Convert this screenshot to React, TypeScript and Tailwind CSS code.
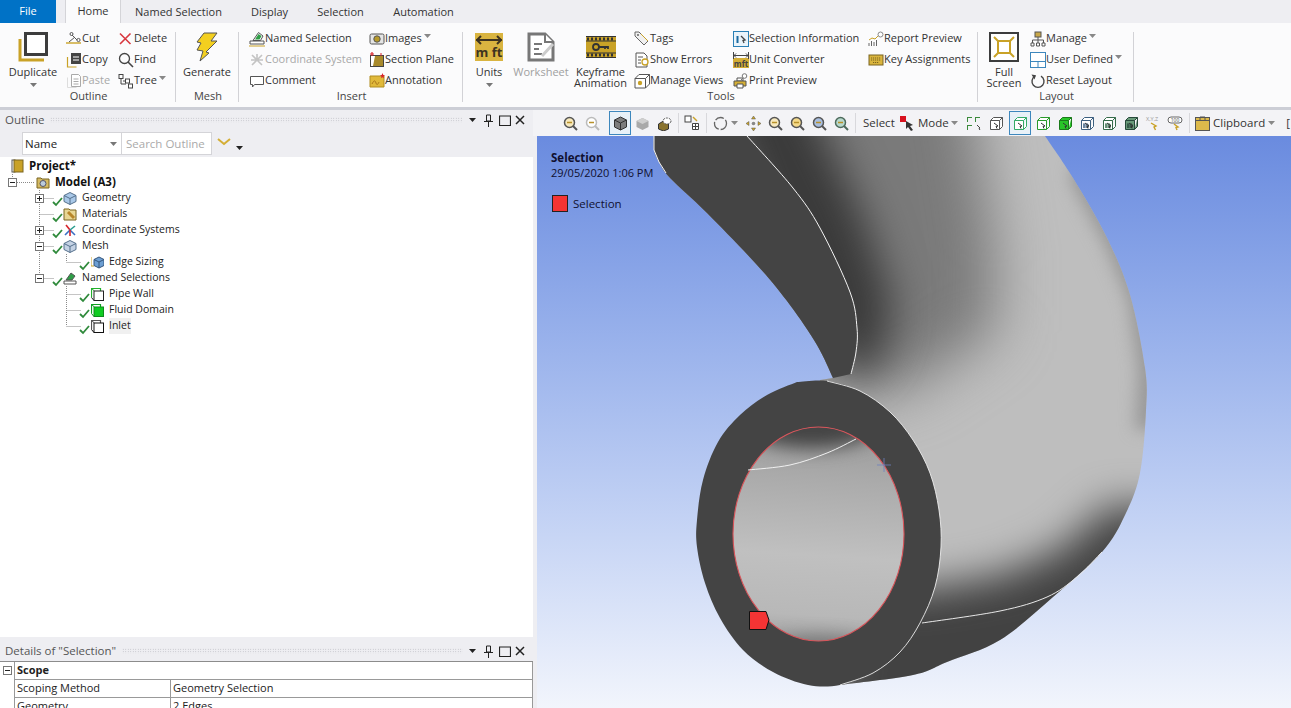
import type { ReactNode } from 'react';

const GOLD = '#c9a227';

function Ico({ children, size = 16, box = 16 }: { children: ReactNode; size?: number; box?: number }) {
  return (
    <svg width={size} height={size} viewBox={`0 0 ${box} ${box}`} className="shrink-0">
      {children}
    </svg>
  );
}

function Caret({ color = '#555' }: { color?: string }) {
  return (
    <svg width="7" height="4" viewBox="0 0 7 4" className="shrink-0">
      <path d="M0 0h7L3.5 4z" fill={color} />
    </svg>
  );
}

const icons: Record<string, ReactNode> = {
  cut: (
    <Ico>
      <path d="M0 12h15" stroke={GOLD} strokeWidth="1.4" />
      <path d="M3 11 9 6M6 4l5 5" stroke="#555" fill="none" />
      <circle cx="5.5" cy="3" r="1.5" fill="none" stroke="#555" />
      <circle cx="12.5" cy="9" r="1.6" fill="none" stroke="#555" />
    </Ico>
  ),
  copy: (
    <Ico>
      <path d="M1.5 5v10h9" fill="none" stroke={GOLD} strokeWidth="1.2" />
      <rect x="5" y="1" width="10" height="11" fill="#444" />
      <path d="M7 5h6M7 8h6" stroke="#fff" />
    </Ico>
  ),
  paste: (
    <Ico>
      <path d="M1.5 4.5v10h9" fill="none" stroke="#ddd" />
      <path d="M5.5 1.5h7l2 2v10h-9z" fill="#fff" stroke="#aaa" />
      <path d="M7.5 6h5M7.5 8.5h5M7.5 11h5" stroke="#aaa" />
    </Ico>
  ),
  del: (
    <Ico>
      <path d="M2 2.500l10.500 10.500M12.500 2.500 2 13" stroke="#d8383f" strokeWidth="1.6" />
    </Ico>
  ),
  find: (
    <Ico>
      <circle cx="6.5" cy="6.5" r="5" fill="none" stroke="#444" strokeWidth="1.3" />
      <path d="M10 10l5 5" stroke="#444" strokeWidth="1.6" />
    </Ico>
  ),
  tree: (
    <Ico>
      <path d="M3 5v6h5M5 8h3" fill="none" stroke="#444" />
      <rect x="1" y="1.5" width="4" height="4" fill="#fff" stroke="#444" />
      <rect x="7.5" y="6" width="4" height="4" fill="#fff" stroke="#444" />
      <rect x="10.5" y="11" width="4" height="4" fill="#fff" stroke="#444" />
    </Ico>
  ),
  named: (
    <Ico>
      <path d="M4 9.500 9.500 1.500 14 5l-2.500 4.500z" fill="#fff" stroke="#555" />
      <path d="M6 8.500l3.500-5.500 3 2-2 3.500z" fill="#2e9e47" />
      <path d="M1 10h14v3H1z" fill="#fff" stroke="#555" />
      <path d="M0 15h16" stroke={GOLD} />
    </Ico>
  ),
  coord: (
    <Ico>
      <path d="M8 8 3 3M8 8l5-5M8 8l-5 5M8 8l5 5M8 8V2M8 8H2M8 8h6" stroke="#c4c4c4" strokeWidth="1.600" />
    </Ico>
  ),
  comment: (
    <Ico>
      <path d="M1.500 3.500h13v8h-9l-2 2.500v-2.500h-2z" fill="#fff" stroke="#555" />
    </Ico>
  ),
  images: (
    <Ico>
      <rect x="1" y="3" width="14" height="10" rx="1.500" fill="#e5e5e5" stroke="#555" />
      <circle cx="8" cy="8" r="3.200" fill="#b79a2a" stroke="#555" />
    </Ico>
  ),
  section: (
    <Ico>
      <rect x="1.500" y="3.500" width="13" height="11" fill="#fff" stroke="#444" />
      <path d="M6 4h8v10H4z" fill="#a88a2b" />
      <path d="M3 0v4M1 2h4" stroke="#d8232a" strokeWidth="1.200" />
      <path d="M12 1v3" stroke="#d8232a" />
    </Ico>
  ),
  annotation: (
    <Ico>
      <path d="M1 3h14v11H1z" fill="#e0b93a" stroke="#b08d20" />
      <path d="M3 11c2-4 3-4 4-1s2 1 3-1" stroke="#a9761c" fill="none" />
      <path d="M13.500 0l.8 2 1.700.3-1.500 1.200.5 1.800-1.500-1-1.500 1 .5-1.800L11 2.300 12.700 2z" fill="#d8232a" />
    </Ico>
  ),
  tags: (
    <Ico>
      <path d="M5 1 14 10l-4 4L1 5V1z" fill="#f0f0f0" stroke="#666" />
      <path d="M7 3l7 7" stroke={GOLD} />
      <circle cx="4" cy="4" r="1" fill="#666" />
    </Ico>
  ),
  errors: (
    <Ico>
      <path d="M2 1h8l3 3v11H2z" fill="#fff" stroke="#555" />
      <path d="M4 5h5M4 8h3M4 11h3" stroke="#555" />
      <circle cx="11" cy="10" r="3" fill="#fff" stroke={GOLD} strokeWidth="1.300" />
    </Ico>
  ),
  views: (
    <Ico>
      <path d="M1 5.500h10.500V15H1zM1 5.500 5 1.500h10.500L11.500 5.500M15.500 1.500V11l-4 4" fill="#fff" stroke="#555" />
      <circle cx="6" cy="10" r="2.200" fill={GOLD} />
    </Ico>
  ),
  info: (
    <Ico>
      <rect x=".5" y=".5" width="15" height="15" fill="#eaf4fb" stroke="#2a7fb5" />
      <path d="M4.500 5v7" stroke="#1b6aa0" strokeWidth="2" />
      <path d="M8 5l4 4-2 .5 1 2.500" stroke="#444" fill="none" strokeWidth="1.300" />
    </Ico>
  ),
  unit: (
    <Ico>
      <rect y="6" width="16" height="10" fill="#d4ae35" />
      <path d="M1 3.500h14M3 1.500 1 3.500l2 2M13 1.500l2 2-2 2M.5 0v7M15.500 0v7" stroke="#444" fill="none" />
      <text x="8" y="14.500" fontSize="8" fontWeight="700" textAnchor="middle" fill="#444" fontFamily="Open Sans, sans-serif">mft</text>
    </Ico>
  ),
  print: (
    <Ico>
      <path d="M4 5h6v3H4z" fill="#fff" stroke="#555" />
      <path d="M1 8h12v5H1z" fill="#d4ae35" stroke="#555" />
      <path d="M4 11h6v4H4z" fill="#fff" stroke="#555" />
      <circle cx="11.500" cy="3" r="2.300" fill="#fff" stroke="#777" />
      <path d="M10 5l-2 2" stroke="#777" />
    </Ico>
  ),
  report: (
    <Ico>
      <path d="M1 15v-3M3.500 15v-5M6 15v-4M8.500 15v-6" stroke="#666" />
      <path d="M1 9l3-2 3 1 3-3" stroke={GOLD} fill="none" />
      <circle cx="12.500" cy="3.500" r="2.500" fill="#fff" stroke="#888" />
    </Ico>
  ),
  keys: (
    <Ico>
      <rect x="1" y="3" width="14" height="10" fill="#d9b43d" stroke="#7a6520" />
      <path d="M3 6h10M3 8h10M5 10.500h6" stroke="#7a6520" strokeDasharray="1.200 .8" />
    </Ico>
  ),
  manage: (
    <Ico>
      <rect x="5" y="1" width="6" height="5" fill="#c9a84a" stroke="#555" />
      <path d="M8 6v3M2.500 12V9h11v3M8 9v3" stroke="#555" fill="none" />
      <path d="M1 12h3v3H1zM6.500 12h3v3h-3zM12 12h3v3h-3z" fill="#fff" stroke="#555" />
    </Ico>
  ),
  user: (
    <Ico>
      <rect x=".5" y=".5" width="15" height="15" fill="#fff" stroke="#3d87bd" />
      <path d="M.5 9.500h15M8 9.500v6" stroke="#3d87bd" />
    </Ico>
  ),
  reset: (
    <Ico>
      <path d="M5 3.200a6 6 0 1 0 6 0" fill="none" stroke="#444" strokeWidth="1.400" />
      <path d="M1.500 1.500 6 2.200 4.500 6.500z" fill="#444" />
    </Ico>
  ),
};

function Small({ icon, label, off, caret }: { icon: string; label: string; off?: boolean; caret?: boolean }) {
  return (
    <div className={`flex h-[21px] items-center pt-[2px] ${off ? 'text-[#a8a8a8]' : 'text-[#333]'}`}>
      <span className="w-4 shrink-0">{icons[icon]}</span>
      <span className="whitespace-nowrap">{label}</span>
      {caret && <span className="ml-[2px] mb-[5px]"><Caret color="#888" /></span>}
    </div>
  );
}

function Big({ icon, lines, caret, off, w }: { icon: ReactNode; lines: string[]; caret?: boolean; off?: boolean; w: string }) {
  return (
    <div className={`flex flex-col items-center ${w} ${off ? 'text-[#a0a0a0]' : 'text-[#333]'}`}>
      <div className="flex h-[39px] items-center">{icon}</div>
      {lines.map((l) => (
        <span key={l} className="whitespace-nowrap leading-[11px]">{l}</span>
      ))}
      {caret && <span className="mt-[6px]"><Caret color="#777" /></span>}
    </div>
  );
}

function Group({ label, w, children }: { label: string; w: string; children: ReactNode }) {
  return (
    <div className={`${w} flex shrink-0 flex-col`}>
      <div className="flex h-[61px]">{children}</div>
      <div className="h-4 pl-[2px] text-center leading-4 text-[#444]">{label}</div>
    </div>
  );
}

function Sep() {
  return <div className="my-[5px] w-px shrink-0 bg-[#d2d2d6]" />;
}

function Ribbon() {
  return (
    <div className="flex h-[84px] bg-[#fbfbfc] pt-[4px] text-[11px]">
      <Group label="Outline" w="w-[175px]">
        <Big
          w="w-[66px]"
          caret
          lines={['Duplicate']}
          icon={
            <svg width="30" height="30" viewBox="0 0 30 30">
              <path d="M2 7v21h24" fill="none" stroke={GOLD} strokeWidth="3" />
              <rect x="7.500" y="1.500" width="21" height="21" fill="#fff" stroke="#3d3d3d" strokeWidth="3" />
            </svg>
          }
        />
        <div className="w-[52px]">
          <Small icon="cut" label="Cut" />
          <Small icon="copy" label="Copy" />
          <Small icon="paste" label="Paste" off />
        </div>
        <div>
          <Small icon="del" label="Delete" />
          <Small icon="find" label="Find" />
          <Small icon="tree" label="Tree" caret />
        </div>
      </Group>
      <Sep />
      <Group label="Mesh" w="w-[62px]">
        <Big
          w="w-full"
          lines={['Generate']}
          icon={
            <svg width="24" height="30" viewBox="0 0 24 30">
              <path d="M9 1h13l-6 8h6L11 20l3 1-9 8 3-10-6-1 4-7-4-1z" fill="#f3cf1f" stroke="#555" />
            </svg>
          }
        />
      </Group>
      <Sep />
      <Group label="Insert" w="w-[223px]">
        <div className="w-[130px] pl-[10px]">
          <Small icon="named" label="Named Selection" />
          <Small icon="coord" label="Coordinate System" off />
          <Small icon="comment" label="Comment" />
        </div>
        <div>
          <Small icon="images" label="Images" caret />
          <Small icon="section" label="Section Plane" />
          <Small icon="annotation" label="Annotation" />
        </div>
      </Group>
      <Sep />
      <Group label="Tools" w="w-[514px]">
        <Big
          w="w-[52px]"
          caret
          lines={['Units']}
          icon={
            <svg width="28" height="28" viewBox="0 0 28 28">
              <rect width="28" height="28" fill="#d9b440" />
              <path d="M1 7h26M6 3 2 7l4 4M22 3l4 4-4 4" stroke="#3d3320" strokeWidth="2" fill="none" />
              <text x="14" y="24" fontSize="13" fontWeight="700" textAnchor="middle" fill="#3d3320" fontFamily="Open Sans, sans-serif">m ft</text>
            </svg>
          }
        />
        <Big
          w="w-[52px]"
          off
          lines={['Worksheet']}
          icon={
            <svg width="28" height="30" viewBox="0 0 28 30">
              <path d="M2 2h16l8 8v18H2z" fill="#fff" stroke="#777" strokeWidth="3" />
              <path d="M18 2v8h8" fill="#fff" stroke="#777" strokeWidth="2" />
              <path d="M7 12h8M7 17h5M7 22h8" stroke="#777" strokeWidth="2" />
              <path d="M15 24 26 12" stroke="#ccc" strokeWidth="3" />
            </svg>
          }
        />
        <Big
          w="w-[67px]"
          lines={['Keyframe', 'Animation']}
          icon={
            <svg width="30" height="22" viewBox="0 0 30 22">
              <rect width="30" height="22" fill="#c9a227" />
              <path d="M0 .5h30M0 21.500h30" stroke="#333" />
              <path d="M1 3h28M1 19h28" stroke="#333" strokeWidth="3" strokeDasharray="2 2" />
              <path d="M0 5h30M0 17h30" stroke="#333" />
              <circle cx="10" cy="11" r="3" fill="none" stroke="#333" strokeWidth="1.800" />
              <path d="M13 11h9v2M19 11v2" stroke="#333" strokeWidth="1.800" fill="none" />
            </svg>
          }
        />
        <div className="w-[99px]">
          <Small icon="tags" label="Tags" />
          <Small icon="errors" label="Show Errors" />
          <Small icon="views" label="Manage Views" />
        </div>
        <div className="w-[135px]">
          <Small icon="info" label="Selection Information" />
          <Small icon="unit" label="Unit Converter" />
          <Small icon="print" label="Print Preview" />
        </div>
        <div>
          <Small icon="report" label="Report Preview" />
          <Small icon="keys" label="Key Assignments" />
        </div>
      </Group>
      <Sep />
      <Group label="Layout" w="w-[155px]">
        <Big
          w="w-[52px]"
          lines={['Full', 'Screen']}
          icon={
            <svg width="30" height="30" viewBox="0 0 30 30">
              <rect x="1" y="1" width="28" height="28" fill="#fff" stroke="#3d3d3d" strokeWidth="2" />
              <path d="M9 9h12v12H9z" fill="none" stroke={GOLD} strokeWidth="2" />
              <path d="M5 5l4 4M25 5l-4 4M5 25l4-4M25 25l-4-4" stroke={GOLD} strokeWidth="2" />
            </svg>
          }
        />
        <div>
          <Small icon="manage" label="Manage" caret />
          <Small icon="user" label="User Defined" caret />
          <Small icon="reset" label="Reset Layout" />
        </div>
      </Group>
      <Sep />
    </div>
  );
}

function Grip() {
  return <div className="mx-[6px] h-[6px] flex-1 bg-[radial-gradient(#b4b4bc_0.6px,transparent_0.8px)] bg-[length:2.5px_2.5px]" />;
}

function PanelHeader({ title }: { title: string }) {
  return (
    <div className="flex h-5 items-center bg-[#eeeef2] pl-[5px] pr-2 text-[11.5px] text-[#555]">
      <span className="whitespace-nowrap">{title}</span>
      <Grip />
      <div className="flex items-center">
        <Caret color="#222" />
        <svg width="9" height="13" viewBox="0 0 9 13" className="ml-2">
          <path d="M2.500 1h4v6h-4zM0 7.500h9M4.500 8v5" stroke="#222" fill="none" />
        </svg>
        <svg width="12" height="11" viewBox="0 0 12 11" className="ml-[6px]">
          <path d="M.5 1h11v9.500H.5z" stroke="#222" strokeWidth="1.200" fill="none" />
        </svg>
        <svg width="10" height="10" viewBox="0 0 10 10" className="ml-1">
          <path d="M1 1l8 8M9 1 1 9" stroke="#222" strokeWidth="1.500" />
        </svg>
      </div>
    </div>
  );
}

function Box({ x, y, open }: { x: number; y: number; open?: boolean }) {
  return (
    <g>
      <rect x={x + 0.5} y={y + 0.5} width="8" height="8" fill="#fff" stroke="#777" />
      <path d={`M${x + 2} ${y + 4.5}h5`} stroke="#222" />
      {!open && <path d={`M${x + 4.5} ${y + 2}v5`} stroke="#222" />}
    </g>
  );
}

function Check({ x }: { x: number }) {
  return <path d={`M${x} 12l3 3 6-7`} fill="none" stroke="#2f8a3b" strokeWidth="1.800" />;
}

function Dots({ d }: { d: string }) {
  return <path d={d} stroke="#8a8a8a" strokeDasharray="1 1" fill="none" />;
}

const cube = (c: string) => (
  <Ico size={14} box={14}>
    <path d="M1 4.500 7 1.500l6 3v6l-6 3-6-3z" fill={c} stroke="#55708c" />
    <path d="M1 4.500l6 3 6-3M7 7.500v6" fill="none" stroke="#55708c" />
  </Ico>
);

// selection-set cube: back corner tinted, front face on top
const face = (front: string, back: string, line: string) => (
  <Ico size={13} box={13}>
    <path d="M.5 9.500V.5h9v2.500" fill="none" stroke={back} strokeWidth="1.200" />
    <path d="M.5.5l3 2.500" stroke={back} />
    <rect x="3" y="3" width="9.500" height="9.500" fill={front} stroke={line} />
    <path d="M.5 9.500l2.500 3" stroke={line} />
  </Ico>
);

type TreeRow = { text: string; bold?: boolean; icon: ReactNode; gutter: ReactNode; w: number; highlight?: boolean };

const level2 = (guide: boolean, box: boolean, open?: boolean) => (
  <>
    <Dots d={`M39.500 0V${guide ? 16 : 8}M39.500 8.500H54`} />
    {box && <Box x={35} y={4} open={open} />}
    <Check x={53} />
  </>
);

const level3 = (outer: boolean, last?: boolean) => (
  <>
    {outer && <Dots d="M39.500 0V16" />}
    <Dots d={`M66.500 0V${last ? 8 : 16}M66.500 8.500H81`} />
    <Check x={80} />
  </>
);

const rows: TreeRow[] = [
  {
    text: 'Project*',
    bold: true,
    w: 10,
    gutter: null,
    icon: (
      <Ico size={14} box={14}>
        <rect x="2" y="1" width="3" height="12" fill="#fff" stroke="#555" />
        <rect x="4" y="1" width="9" height="12" fill="#c9a227" stroke="#7a6520" />
      </Ico>
    ),
  },
  {
    text: 'Model (A3)',
    bold: true,
    w: 36,
    gutter: (
      <>
        <Dots d="M12.500 0V4M17 8.500H34" />
        <Box x={8} y={4} open />
      </>
    ),
    icon: (
      <Ico size={14} box={14}>
        <path d="M1 3h4l1 1h7v9H1z" fill="#d5ba62" stroke="#7a6520" />
        <circle cx="7" cy="8.500" r="3" fill="#bcd" stroke="#556" />
      </Ico>
    ),
  },
  { text: 'Geometry', w: 63, gutter: level2(true, true), icon: cube('#a9c8e8') },
  {
    text: 'Materials',
    w: 63,
    gutter: level2(true, false),
    icon: (
      <Ico size={14} box={14}>
        <path d="M1 2h5l1 1h6v10H1z" fill="#e8d693" stroke="#7a6520" />
        <path d="M5 5l6 6" stroke="#b8862a" strokeWidth="3" />
      </Ico>
    ),
  },
  {
    text: 'Coordinate Systems',
    w: 63,
    gutter: level2(true, true),
    icon: (
      <Ico size={14} box={14}>
        <path d="M7 7 3 2" stroke="#d8232a" strokeWidth="1.600" />
        <path d="M7 7l5-4" stroke="#2a9d8f" strokeWidth="1.600" />
        <path d="M7 7l-5 5M7 7l5 5" stroke="#3a6fc4" strokeWidth="1.600" />
        <path d="M7 7v6" stroke="#d8232a" strokeWidth="1.600" />
      </Ico>
    ),
  },
  { text: 'Mesh', w: 63, gutter: level2(true, true, true), icon: cube('#c4d2e4') },
  {
    text: 'Edge Sizing',
    w: 91,
    gutter: level3(true, true),
    icon: (
      <Ico size={13} box={13}>
        <path d="M0 1v9h3" stroke={GOLD} fill="none" />
        <path d="M3 3.500 8 1l5 2.500v6L8 12 3 9.500z" fill="#6d9fd3" stroke="#34567c" />
        <path d="M3 3.500l5 2.500 5-2.500M8 6v6" fill="none" stroke="#34567c" />
      </Ico>
    ),
  },
  {
    text: 'Named Selections',
    w: 63,
    gutter: level2(false, true, true),
    icon: (
      <Ico size={14} box={14}>
        <path d="M3 9 8 2l4 3-3 4z" fill="#2e9e47" stroke="#555" />
        <path d="M1 10h12v3H1z" fill="#fff" stroke="#555" />
      </Ico>
    ),
  },
  { text: 'Pipe Wall', w: 91, gutter: level3(false), icon: face('#fff', '#22b02c', '#222') },
  { text: 'Fluid Domain', w: 91, gutter: level3(false), icon: face('#10cc22', '#10a020', '#0e8a1c') },
  { text: 'Inlet', w: 91, gutter: level3(false, true), icon: face('#fff', '#555', '#111'), highlight: true },
];

function Tree() {
  return (
    <div className="flex-1 bg-white pt-px text-[10.5px] text-[#222]">
      {rows.map((r) => (
        <div key={r.text} className="flex h-4 items-center">
          <svg width={r.w} height="16" viewBox={`0 0 ${r.w} 16`} className="shrink-0 overflow-visible">
            {r.gutter}
          </svg>
          {r.icon}
          <span
            className={`whitespace-nowrap ${r.bold ? 'ml-[5px] text-[11.5px] font-bold text-[#111]' : 'ml-[5px]'} ${
              r.highlight ? 'bg-[#f0f0f0]' : ''
            }`}
          >
            {r.text}
          </span>
        </div>
      ))}
    </div>
  );
}

function LeftPanel() {
  return (
    <div className="flex w-[533px] shrink-0 flex-col">
      <PanelHeader title="Outline" />
      <div className="flex h-[27px] items-center bg-[#eeeef2] pl-[22px] text-[11.5px]">
        <div className="flex h-[23px] w-[100px] items-center justify-between border border-[#d4d4d8] bg-white pl-[2px] pr-[4px] text-[#222]">
          Name
          <Caret color="#777" />
        </div>
        <div className="flex h-[23px] w-[90px] items-center border border-l-0 border-[#d4d4d8] bg-white pl-[4px] text-[#aaa]">
          Search Outline
        </div>
        <svg width="14" height="8" viewBox="0 0 14 8" className="ml-[5px] mb-[3px]">
          <path d="M1 1l6 5 6-5" stroke="#d4ae35" strokeWidth="2" fill="none" />
        </svg>
        <span className="ml-[5px] mt-[8px]"><Caret color="#222" /></span>
      </div>
      <Tree />
      <div className="h-1 bg-[#eeeef2]" />
      <PanelHeader title={'Details of "Selection"'} />
      <div className="flex h-[47px] overflow-hidden border-t border-[#8c8c8c] text-[11px] text-[#222]">
        <div className="w-[14px] shrink-0 bg-white pl-[3px] pt-[4px]">
          <svg width="9" height="9" viewBox="0 0 9 9">
            <rect x=".5" y=".5" width="8" height="8" fill="#fff" stroke="#777" />
            <path d="M2 4.500h5" stroke="#222" />
          </svg>
        </div>
        <div className="flex-1">
          <div className="h-[18px] border-x border-b border-[#999] pl-[2px] font-bold leading-[16px]">Scope</div>
          {[
            ['Scoping Method', 'Geometry Selection'],
            ['Geometry', '2 Edges'],
          ].map(([k, v]) => (
            <div key={k} className="flex h-[18px] border-x border-b border-[#999] leading-[16px]">
              <div className="w-[156px] border-r border-[#999] pl-[2px]">{k}</div>
              <div className="pl-[2px]">{v}</div>
            </div>
          ))}
        </div>
      </div>
    </div>
  );
}

function Tool({ on, children }: { on?: boolean; children: ReactNode }) {
  return (
    <div className={`flex h-[24px] w-[22px] shrink-0 items-center justify-center ${on ? 'border border-[#3d87bd] bg-[#e8f1f8]' : ''}`}>
      {children}
    </div>
  );
}

function Mag({ c, inner }: { c: string; inner?: string }) {
  return (
    <svg width="15" height="15" viewBox="0 0 15 15">
      <circle cx="6.500" cy="6.500" r="5" fill={inner ?? '#fff'} stroke={c} strokeWidth="1.500" />
      <path d="M10 10l4 4" stroke={c} strokeWidth="2" />
      <path d="M4 6.500h5" stroke="#b8912a" strokeWidth="1.500" />
    </svg>
  );
}

function TCube({ fill, stroke, cross }: { fill: string; stroke: string; cross?: string }) {
  return (
    <svg width="15" height="15" viewBox="0 0 15 15">
      <path d="M1.500 4.500h9v9h-9zM1.500 4.500l3-3h9l-3 3M13.500 1.500v9l-3 3" fill={fill} stroke={stroke} />
      {cross && <path d="M4 7v5M7 7v5M3 9h6M3 11h6" stroke={cross} />}
      <path d="M5 7l4 3-2 .5 1 2" stroke="#333" fill="none" />
    </svg>
  );
}

function ToolDiv() {
  return <div className="mx-[2.5px] h-[20px] w-px shrink-0 bg-[#d8d8dc]" />;
}

function ViewToolbar() {
  return (
    <div className="flex h-[26px] items-center bg-[#f3f3f6] pl-[26px] text-[11.5px] text-[#333]">
      <Tool><Mag c="#555" inner="#f7e9be" /></Tool>
      <Tool><Mag c="#bbb" /></Tool>
      <div className="w-[6px] shrink-0" />
      <Tool on>
        <svg width="15" height="15" viewBox="0 0 15 15">
          <path d="M1.500 4 7.500 1l6 3v7l-6 3-6-3z" fill="#7d7d7d" stroke="#333" />
          <path d="M1.500 4l6 3 6-3M7.500 7v7" fill="none" stroke="#333" />
        </svg>
      </Tool>
      <Tool>
        <svg width="15" height="15" viewBox="0 0 15 15">
          <path d="M1.500 5 7.500 2l6 3v6l-6 3-6-3z" fill="#a9a9a9" />
          <path d="M1.500 5l6 3 6-3-6-3z" fill="#cfcfcf" />
        </svg>
      </Tool>
      <Tool>
        <svg width="15" height="15" viewBox="0 0 15 15">
          <path d="M1.500 8l5-3 5 3v5l-5 2-5-2z" fill="#8a7430" stroke="#333" />
          <ellipse cx="10" cy="5" rx="4" ry="3" fill="#fff" stroke="#555" strokeDasharray="2 1" />
        </svg>
      </Tool>
      <ToolDiv />
      <Tool>
        <svg width="16" height="16" viewBox="0 0 16 16">
          <rect x="1" y="1" width="6" height="6" fill="#fff" stroke="#444" />
          <path d="M8.500 8.500h6v6h-6zM11.500 8.500v6M8.500 11.500h6" fill="#fff" stroke="#444" />
          <path d="M9 2l4 4" stroke={GOLD} strokeWidth="1.500" />
        </svg>
      </Tool>
      <ToolDiv />
      <Tool>
        <svg width="15" height="15" viewBox="0 0 15 15">
          <circle cx="7.500" cy="7.500" r="6" fill="none" stroke="#666" strokeDasharray="9 2" strokeWidth="1.300" />
        </svg>
      </Tool>
      <span className="mr-[4px]"><Caret color="#888" /></span>
      <Tool>
        <svg width="15" height="15" viewBox="0 0 15 15">
          <path d="M7.500 0l2 3h-4zM7.500 15l-2-3h4zM0 7.500l3-2v4zM15 7.500l-3 2v-4z" fill="#c9a227" stroke="#555" strokeWidth=".5" />
          <circle cx="7.500" cy="7.500" r="1.800" fill="#888" />
        </svg>
      </Tool>
      <Tool><Mag c="#555" inner="#f7e9be" /></Tool>
      <Tool><Mag c="#555" inner="#f4d98a" /></Tool>
      <Tool><Mag c="#555" inner="#a9bfe0" /></Tool>
      <Tool><Mag c="#4d6a5c" inner="#b7d9cd" /></Tool>
      <ToolDiv />
      <span className="ml-[5px] w-[36px] shrink-0">Select</span>
      <svg width="16" height="16" viewBox="0 0 16 16" className="shrink-0">
        <rect x="1" y="1" width="6" height="6" fill="#d8121f" />
        <path d="M7 6l7 4-3 1 3 4-2 1-3-4-2 2z" fill="#333" />
      </svg>
      <span className="ml-[3px] w-[30px] shrink-0">Mode</span>
      <span className="ml-[3px] shrink-0"><Caret color="#888" /></span>
      <div className="w-1 shrink-0" />
      <Tool>
        <svg width="15" height="15" viewBox="0 0 15 15">
          <path d="M1 1h5v1H2v4H1zM9 1h5v1h-4v4H9zM1 9h5v1H2v4H1z" fill="#3a8a3a" />
          <path d="M11 9l3 3-1 .5 1 1.500" stroke="#444" fill="none" />
        </svg>
      </Tool>
      <div className="w-px shrink-0" />
      <Tool><TCube fill="#fff" stroke="#555" /></Tool>
      <div className="w-[2px] shrink-0" />
      <Tool on><TCube fill="#fff" stroke="#3a6" /></Tool>
      <div className="w-px shrink-0" />
      <Tool><TCube fill="#fff" stroke="#2a9a2a" /></Tool>
      <Tool><TCube fill="#28c428" stroke="#1a7a1a" /></Tool>
      <Tool><TCube fill="#fff" stroke="#3c5f80" cross="#3c5f80" /></Tool>
      <Tool><TCube fill="#fff" stroke="#356b4a" cross="#356b4a" /></Tool>
      <Tool><TCube fill="#6a9a7a" stroke="#27493a" cross="#27493a" /></Tool>
      <Tool>
        <svg width="16" height="16" viewBox="0 0 16 16">
          <text x="1" y="6" fontSize="5.500" fill="#999" fontFamily="Open Sans, sans-serif">X,Y,Z</text>
          <path d="M6 8l5 3-2 1 1.500 3" stroke={GOLD} strokeWidth="1.400" fill="none" />
        </svg>
      </Tool>
      <Tool>
        <svg width="16" height="16" viewBox="0 0 16 16">
          <rect x="1" y="2" width="14" height="6" rx="3" fill="#fff" stroke="#666" />
          <text x="8" y="7" fontSize="5" fill="#444" textAnchor="middle" fontFamily="Open Sans, sans-serif">100</text>
          <path d="M7 9l4 3-2 .5 1 2.500" stroke={GOLD} strokeWidth="1.400" fill="none" />
        </svg>
      </Tool>
      <ToolDiv />
      <svg width="15" height="15" viewBox="0 0 15 15" className="ml-[3px] shrink-0">
        <rect x=".5" y="1.500" width="14" height="13" fill="#dcb94b" stroke="#555" />
        <path d="M.5 4.500h14M5 4.500V1h5v3.500" fill="none" stroke="#555" />
      </svg>
      <span className="ml-[3px] shrink-0">Clipboard</span>
      <span className="ml-[3px] shrink-0"><Caret color="#888" /></span>
      <span className="ml-[11px] shrink-0">[</span>
    </div>
  );
}

type P = [number, number];

// catmull-rom through the points, as cubic segments continuing from the first point
function spline(p: P[]) {
  let d = '';
  for (let i = 0; i < p.length - 1; i++) {
    const a = p[i - 1] ?? p[i];
    const b = p[i];
    const c = p[i + 1];
    const e = p[i + 2] ?? c;
    d += `C${b[0] + (c[0] - a[0]) / 6} ${b[1] + (c[1] - a[1]) / 6} ${c[0] - (e[0] - b[0]) / 6} ${c[1] - (e[1] - b[1]) / 6} ${c[0]} ${c[1]}`;
  }
  return d;
}

const RING: P[] = [
  [797, 382], [827, 381], [860, 391], [890, 412], [913, 440], [930, 473], [939, 510], [941, 547], [935, 587], [920, 623],
  [900, 652], [873, 673], [840, 685], [808, 685], [773, 672], [743, 650], [720, 618], [705, 583], [697, 547], [697, 520],
  [703, 480], [718, 442], [740, 415], [767, 395], [797, 382],
];
const RIGHT_EDGE: P[] = [
  [1045, 136], [1073, 178], [1107, 238], [1130, 295], [1145, 368], [1146, 410], [1140, 473], [1125, 515], [1102, 552],
  [1053, 597], [1000, 640], [947, 662], [913, 675], [840, 685],
];
const BACK_EDGE: P[] = [[833, 378], [817, 345], [790, 305], [757, 265], [707, 213], [670, 178], [659, 162], [654, 150], [654, 136]];
const CREASE: P[] = [[747, 136], [793, 188], [820, 228], [850, 292], [857, 328], [856, 352], [851, 374]];

const BODY = `M1045 136${spline(RIGHT_EDGE)}L800 560L820 380L833 378${spline(BACK_EDGE)}Z`;
const BACK = `M654 136H747${spline(CREASE)}L833 378${spline(BACK_EDGE)}Z`;

function Blur({ id, s }: { id: string; s: number }) {
  return (
    <filter id={id} filterUnits="userSpaceOnUse" x="500" y="0" width="900" height="800" colorInterpolationFilters="sRGB">
      <feGaussianBlur stdDeviation={s} />
    </filter>
  );
}

function Pipe() {
  return (
    <svg className="absolute inset-0 h-full w-full" viewBox="537 136 754 572" preserveAspectRatio="none">
      <defs>
        <Blur id="b8" s={8} />
        <Blur id="b9" s={9} />
        <Blur id="b20" s={20} />
        <Blur id="b28" s={28} />
        <linearGradient id="hole" gradientUnits="userSpaceOnUse" x1="825" y1="427" x2="812" y2="641">
          <stop offset="0" stopColor="#9a9a9a" />
          <stop offset=".25" stopColor="#ababab" />
          <stop offset=".6" stopColor="#c0c0c0" />
          <stop offset=".88" stopColor="#b8b8b8" />
          <stop offset="1" stopColor="#a2a2a2" />
        </linearGradient>
        <clipPath id="bodyClip">
          <path d={BODY} />
        </clipPath>
        <clipPath id="holeClip">
          <ellipse cx="818.500" cy="534" rx="85.500" ry="107" />
        </clipPath>
      </defs>
      <path d={BODY} fill="#bebebe" />
      <g clipPath="url(#bodyClip)">
        <polygon points="650,60 965,60 995,250 995,330 905,390 840,395 700,300" fill="#7a7a7a" filter="url(#b28)" />
        <polygon points="700,60 790,60 865,220 892,300 885,350 858,382 800,300" fill="#3a3a3a" filter="url(#b20)" />
        <polygon points="850,590 925,588 1000,575 1060,550 1110,505 1200,510 1200,800 820,800" fill="#424242" filter="url(#b20)" />
        <polygon points="1070,180 1105,245 1128,300 1138,370 1135,430 1200,430 1200,120 1090,120" fill="#999" filter="url(#b8)" />
      </g>
      <path d={BACK} fill="#444" />
      <path d={`M747 136${spline(CREASE)}`} fill="none" stroke="#f4f4f4" />
      <path d="M654 136V150L659 162L666 173" fill="none" stroke="#f4f4f4" />
      <path d={`M922 623${spline([[922, 623], [1000, 611], [1047, 597], [1077, 577], [1102, 552]])}`} fill="none" stroke="#e8e8e8" />
      <path d={`M797 382${spline(RING)}Z`} fill="#444" />
      <path d={`M827 381${spline(RING.slice(1, 13))}`} fill="none" stroke="#eee" strokeWidth=".9" />
      <ellipse cx="818.500" cy="534" rx="85.500" ry="107" fill="url(#hole)" />
      <g clipPath="url(#holeClip)">
        <ellipse cx="812" cy="428" rx="62" ry="20" fill="#444" filter="url(#b9)" />
        <ellipse cx="818" cy="646" rx="50" ry="10" fill="#777" filter="url(#b8)" />
      </g>
      <ellipse cx="818.500" cy="534" rx="85.500" ry="107" fill="none" stroke="#d9545a" strokeWidth="1.100" />
      <path d={`M748 470${spline([[748, 470], [790, 465], [827, 453], [856, 439]])}`} fill="none" stroke="#f0f0f0" />
      <path d="M884 458v14M877 465h14" stroke="#6c80c0" strokeWidth=".8" />
      <path d="M749.500 611.500H766L769 620L766 629.500H749.500Z" fill="#f43434" stroke="#111" />
    </svg>
  );
}

export default function App() {
  return (
    <div className="flex h-[708px] w-[1291px] flex-col overflow-hidden bg-white font-['Open_Sans',sans-serif]">
      <div className="flex h-[23px] items-end bg-[#eeeef2] text-[11px] text-[#333]">
        <div className="flex h-[23px] w-[56px] items-center justify-center bg-[#0072c6] text-white">File</div>
        <div className="ml-[9px] flex h-[23px] w-[56px] items-center justify-center border-x border-[#d4d4d8] bg-[#fbfbfc]">Home</div>
        <div className="flex h-[22px] w-[115px] items-center justify-center">Named Selection</div>
        <div className="flex h-[22px] w-[67px] items-center justify-center">Display</div>
        <div className="flex h-[22px] w-[75px] items-center justify-center">Selection</div>
        <div className="flex h-[22px] w-[91px] items-center justify-center">Automation</div>
      </div>
      <Ribbon />
      <div className="h-[3px] bg-[#ccced6]" />
      <div className="flex min-h-0 flex-1">
        <LeftPanel />
        <div className="flex min-w-0 flex-1 flex-col bg-[#eeeef2]">
          <ViewToolbar />
          <div className="relative ml-[4px] flex-1 overflow-hidden bg-linear-to-b from-[#6a8bdf] to-[#f2f5fc] text-[11.5px] text-[#101030]">
            <Pipe />
            <div className="absolute left-[14px] top-[14px] leading-[15px]">
              <div className="font-bold">Selection</div>
              <div className="text-[11px]">29/05/2020 1:06 PM</div>
              <div className="mt-[15px] flex items-center">
                <span className="ml-px h-[17px] w-4 border border-[#222] bg-[#f43434]" />
                <span className="ml-[5px]">Selection</span>
              </div>
            </div>
          </div>
        </div>
      </div>
    </div>
  );
}
